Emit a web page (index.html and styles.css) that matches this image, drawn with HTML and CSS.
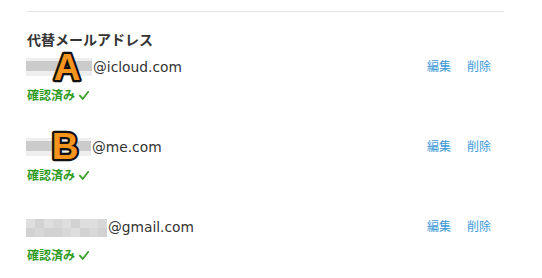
FILE: index.html
```html
<!DOCTYPE html>
<html lang="ja">
<head>
<meta charset="utf-8">
<link rel="stylesheet" href="styles.css">
</head>
<body>
<div class="panel">
  <div class="rule"></div>
  <h2 class="heading">代替メールアドレス</h2>

  <div class="entry">
    <div class="line">
      <div class="addr">
        <span class="blur b1"></span><span class="domain">@icloud.com</span>
        <svg class="badge badge-a" viewBox="0 0 32 34" width="32" height="34"><text x="16" y="31" text-anchor="middle">A</text></svg>
      </div>
      <div class="actions"><a>編集</a><a>削除</a></div>
    </div>
    <div class="verified">確認済み <svg class="check" viewBox="0 0 10 9" width="10" height="9"><path d="M0.9 4.6 L3.7 8 L9.3 0.8"/></svg></div>
  </div>

  <div class="entry">
    <div class="line">
      <div class="addr">
        <span class="blur b2"></span><span class="domain">@me.com</span>
        <svg class="badge badge-b" viewBox="0 0 32 34" width="32" height="34"><text x="16" y="31" text-anchor="middle">B</text></svg>
      </div>
      <div class="actions"><a>編集</a><a>削除</a></div>
    </div>
    <div class="verified">確認済み <svg class="check" viewBox="0 0 10 9" width="10" height="9"><path d="M0.9 4.6 L3.7 8 L9.3 0.8"/></svg></div>
  </div>

  <div class="entry">
    <div class="line">
      <div class="addr">
        <span class="blur b3">
          <span class="row"><span class="c p1"></span><span class="c p2"></span><span class="c p1"></span><span class="c p3"></span><span class="c p1"></span><span class="c p2"></span><span class="c p1"></span><span class="c p1"></span><span class="c p3"></span></span>
          <span class="row"><span class="c p2"></span><span class="c p3"></span><span class="c p2"></span><span class="c p2"></span><span class="c p3"></span><span class="c p1"></span><span class="c p2"></span><span class="c p3"></span><span class="c p2"></span></span>
        </span><span class="domain">@gmail.com</span>
      </div>
      <div class="actions"><a>編集</a><a>削除</a></div>
    </div>
    <div class="verified">確認済み <svg class="check" viewBox="0 0 10 9" width="10" height="9"><path d="M0.9 4.6 L3.7 8 L9.3 0.8"/></svg></div>
  </div>
</div>
</body>
</html>
```

FILE: styles.css
```css
html, body {
  margin: 0;
  padding: 0;
  background: #ffffff;
}

body {
  font-family: "Noto Sans CJK JP", "DejaVu Sans", sans-serif;
  color: #333333;
}

.panel {
  width: 477px;
  margin-left: 27px;
  padding-top: 11px;
}

.rule {
  height: 1px;
  background: #e3e3e3;
}

.heading {
  margin: 18px 0 6px 0;
  font-size: 14px;
  line-height: 18px;
  font-weight: 700;
  color: #333333;
}

.entry {
  margin-bottom: 30px;
}

.entry:last-child {
  margin-bottom: 0;
}

.line {
  display: flex;
  justify-content: space-between;
  align-items: center;
  height: 26px;
}

.addr {
  position: relative;
  display: flex;
  align-items: center;
  height: 26px;
}

.domain {
  font-family: "DejaVu Sans", sans-serif;
  font-size: 13.8px;
  color: #333333;
  margin-left: 1px;
}

.blur {
  display: flex;
  margin-left: -1px;
}

.b1, .b2 {
  width: 66px;
  height: 18px;
  background: linear-gradient(#efefef 0, #efefef 3px, #cbcbcb 3px, #cbcbcb 13px, #eeeeee 13px);
}

.b2 {
  width: 65px;
}

.b3 {
  flex-direction: column;
  width: 81px;
  height: 18px;
  margin-top: 2px;
}

.row {
  display: flex;
  height: 9px;
}

.row .c {
  width: 9px;
  height: 9px;
}

.p1 { background: #dedede; }
.p2 { background: #d2d2d2; }
.p3 { background: #d8d8d8; }

.badge {
  position: absolute;
  top: -5px;
  overflow: visible;
}

.badge-a { left: 24px; }
.badge-b { left: 22px; top: -6px; }

.badge text {
  font-family: "Liberation Sans", sans-serif;
  font-weight: 700;
  font-size: 37px;
  fill: #f7941d;
  stroke: #111111;
  stroke-width: 4.5px;
  stroke-linejoin: round;
  paint-order: stroke;
}

.actions {
  display: flex;
  gap: 16px;
  margin-right: 13px;
  margin-top: -4px;
}

.actions a {
  font-size: 12px;
  color: #3d9ad8;
  cursor: pointer;
}

.verified {
  display: flex;
  align-items: center;
  gap: 4px;
  margin-top: 6px;
  font-size: 12px;
  line-height: 18px;
  font-weight: 700;
  color: #2e9a1e;
}

.check {
  fill: none;
  stroke: #3aa02a;
  stroke-width: 1.8px;
  stroke-linecap: round;
  stroke-linejoin: round;
  margin-top: 1px;
}
```
